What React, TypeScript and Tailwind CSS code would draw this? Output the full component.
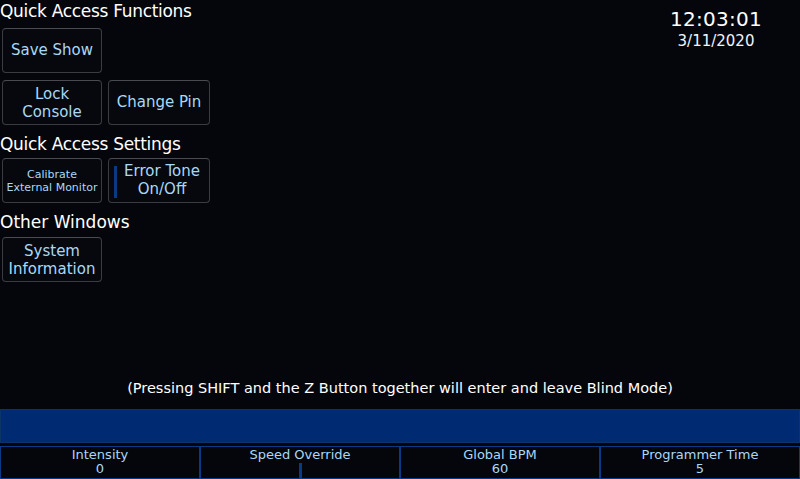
import React from "react";

const font = { fontFamily: '"DejaVu Sans", sans-serif' };

function Btn({ children, className = "" }: { children: React.ReactNode; className?: string }) {
  return (
    <div
      className={
        "relative w-[100px] h-[45px] rounded-[4px] border border-[#3b3c42] border-t-[#4a4b52] bg-[#07080e] flex items-center justify-center text-center text-[#a9d8f6] " +
        className
      }
    >
      {children}
    </div>
  );
}

function Cell({ label, value, bar }: { label: string; value?: string; bar?: boolean }) {
  return (
    <div className="relative flex-1 border border-[#0a3a86] flex flex-col items-center pt-[1px] text-[13px] leading-[14px] text-[#a9d8f6]">
      <div>{label}</div>
      {value !== undefined && <div>{value}</div>}
      {bar && <div className="absolute left-1/2 -ml-[1px] bottom-0 w-[3px] h-[15px] bg-[#0a3a86]" />}
    </div>
  );
}

const H = "text-[17px] leading-[22px] text-white -ml-[2px]";

export default function App() {
  return (
    <div className="w-[800px] h-[479px] bg-[#05060c] flex flex-col overflow-hidden" style={font}>
      <div className="flex justify-between">
        <div className="pl-[2px] w-[220px]">
          <div className={"h-[28px] tracking-[-0.3px] " + H}>Quick Access Functions</div>
          <Btn className="text-[15px]">Save Show</Btn>
          <div className="flex gap-[6px] mt-[7px]">
            <Btn className="text-[15px] leading-[18px]">Lock<br />Console</Btn>
            <Btn className="w-[102px] text-[15px]">Change Pin</Btn>
          </div>
          <div className={"pt-[8px] pb-[3px] tracking-[-0.3px] " + H}>Quick Access Settings</div>
          <div className="flex gap-[6px]">
            <Btn className="text-[11px] leading-[13px]">Calibrate<br />External Monitor</Btn>
            <Btn className="w-[102px] text-[15px] leading-[18px] pl-[6px]">
              <div className="absolute left-[5px] top-[7px] w-[3px] h-[32px] bg-[#0b3a80]" />
              <span className="-mt-[2px]">Error Tone<br />On/Off</span>
            </Btn>
          </div>
          <div className={"pt-[8px] pb-[4px] " + H}>Other Windows</div>
          <Btn className="text-[15px] leading-[18px]">System<br />Information</Btn>
        </div>
        <div className="w-[160px] mr-[4px] pt-[7px] text-center text-white">
          <div className="text-[20px] leading-[24px] tracking-[0.3px]">12:03:01</div>
          <div className="text-[15px] leading-[20px] text-[#f0f4ff]">3/11/2020</div>
        </div>
      </div>
      <div className="flex-1" />
      <div className="text-center text-[14.5px] leading-[18px] text-white mb-[12px]">
        (Pressing SHIFT and the Z Button together will enter and leave Blind Mode)
      </div>
      <div className="h-[34px] bg-[#002b72] border border-[#0c3466]" />
      <div className="h-[3px]" />
      <div className="h-[33px] flex">
        <Cell label="Intensity" value="0" />
        <Cell label="Speed Override" bar />
        <Cell label="Global BPM" value="60" />
        <Cell label="Programmer Time" value="5" />
      </div>
    </div>
  );
}
